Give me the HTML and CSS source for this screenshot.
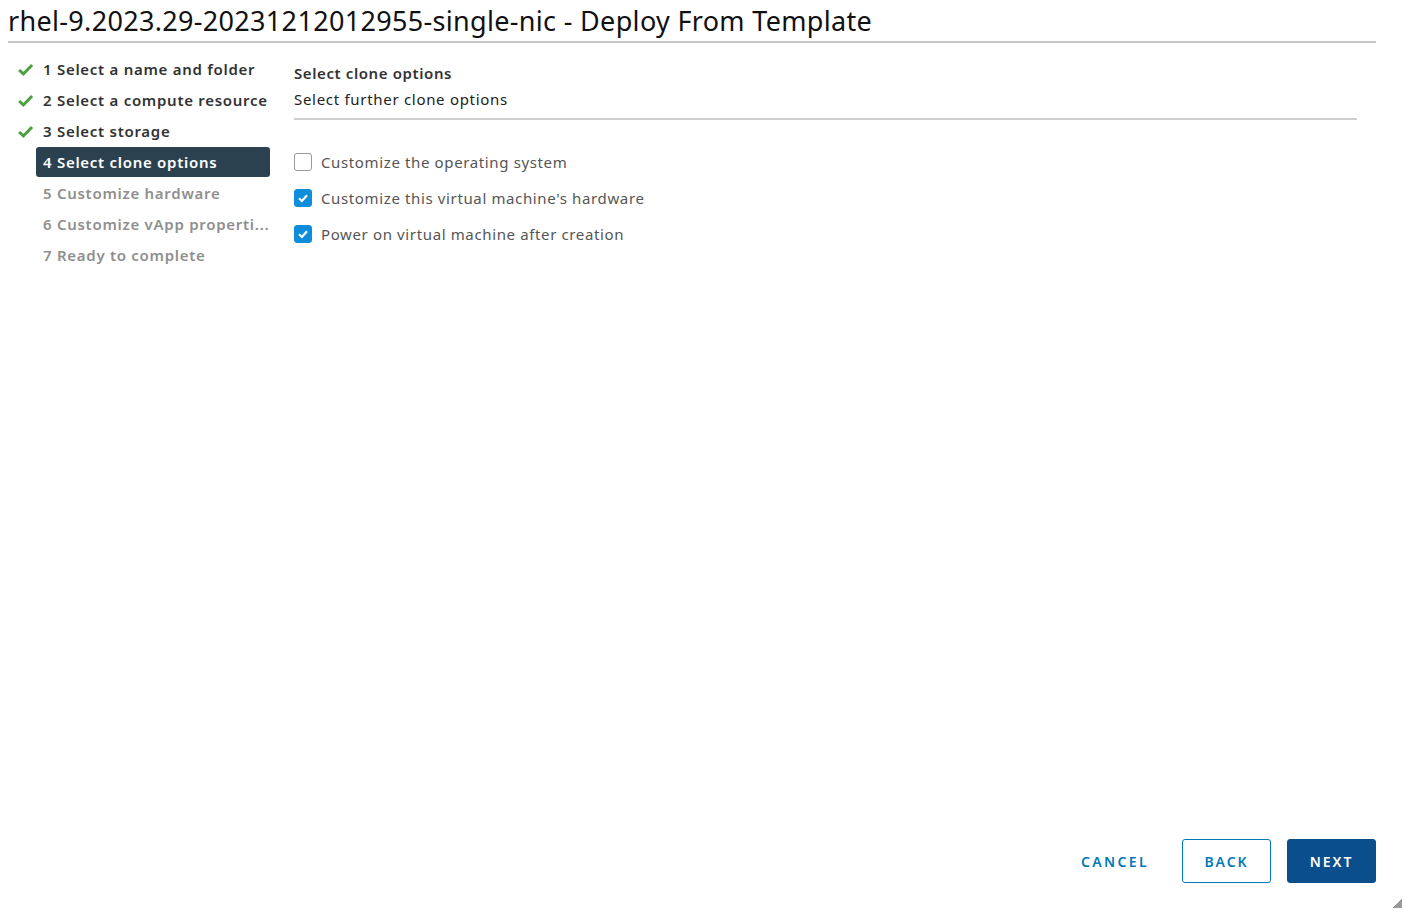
FILE: index.html
```html
<!DOCTYPE html>
<html lang="en">
<head>
<meta charset="utf-8">
<title>Deploy From Template</title>
<link rel="stylesheet" href="styles.css">
</head>
<body>
<div class="page">
  <h1 class="title">rhel-9.2023.29-20231212012955-single-nic - Deploy From Template</h1>
  <div class="wizard">
    <nav class="steps">
      <div class="step done"><svg class="check" viewBox="0 0 16 16"><path d="M2 8.5 L6 12.2 L14.2 3.8" /></svg>1 Select a name and folder</div>
      <div class="step done"><svg class="check" viewBox="0 0 16 16"><path d="M2 8.5 L6 12.2 L14.2 3.8" /></svg>2 Select a compute resource</div>
      <div class="step done"><svg class="check" viewBox="0 0 16 16"><path d="M2 8.5 L6 12.2 L14.2 3.8" /></svg>3 Select storage</div>
      <div class="step active">4 Select clone options</div>
      <div class="step todo">5 Customize hardware</div>
      <div class="step todo">6 Customize vApp properti...</div>
      <div class="step todo">7 Ready to complete</div>
    </nav>
    <main class="content">
      <div class="head">
        <div class="head-title">Select clone options</div>
        <div class="head-sub">Select further clone options</div>
      </div>
      <div class="options">
        <label class="opt"><span class="box"></span>Customize the operating system</label>
        <label class="opt"><span class="box on"><svg viewBox="0 0 16 16"><path d="M4 8.3 L6.9 11 L12 5.3" /></svg></span>Customize this virtual machine's hardware</label>
        <label class="opt"><span class="box on"><svg viewBox="0 0 16 16"><path d="M4 8.3 L6.9 11 L12 5.3" /></svg></span>Power on virtual machine after creation</label>
      </div>
    </main>
  </div>
  <footer class="actions">
    <button class="btn link">CANCEL</button>
    <button class="btn outline">BACK</button>
    <button class="btn primary">NEXT</button>
  </footer>
  <div class="grip"></div>
</div>
</body>
</html>
```
FILE: styles.css
```css
html, body {
  margin: 0;
  padding: 0;
  background: #fff;
}
body {
  font-family: "Noto Sans", "Open Sans", sans-serif;
  color: #333;
}
.page {
  position: relative;
  height: 913px;
  display: flex;
  flex-direction: column;
  box-sizing: border-box;
  padding: 0 34px 30px 8px;
}
.title {
  margin: 0;
  font-weight: 400;
  font-size: 27px;
  letter-spacing: 0.32px;
  line-height: 40px;
  color: #111;
  padding-top: 1px;
  border-bottom: 2px solid #c8c8c8;
}
.wizard {
  flex: 1;
  display: flex;
  padding-top: 11px;
}
.steps {
  width: 262px;
  flex: none;
  padding-left: 28px;
  box-sizing: border-box;
}
.step {
  position: relative;
  height: 31px;
  line-height: 31px;
  font-size: 15px;
  font-weight: 600;
  letter-spacing: 0.72px;
  padding-left: 7px;
  white-space: nowrap;
  border-radius: 3px;
}
.step.done { color: #333; }
.step.todo { color: #8f8f8f; }
.step.active {
  background: #2b414f;
  color: #fff;
  height: 30px;
  line-height: 30px;
  margin-bottom: 1px;
}
.check {
  position: absolute;
  left: -19px;
  top: 7px;
  width: 17px;
  height: 17px;
  fill: none;
  stroke: #4aa23e;
  stroke-width: 2.8;
}
.content {
  flex: 1;
  padding-left: 24px;
  padding-right: 19px;
}
.head {
  border-bottom: 2px solid #cfcfcf;
  padding-top: 7px;
  padding-bottom: 5px;
}
.head-title {
  font-size: 15px;
  font-weight: 600;
  letter-spacing: 0.6px;
  line-height: 24px;
  color: #333;
}
.head-sub {
  font-size: 15px;
  letter-spacing: 0.7px;
  line-height: 28px;
  color: #222;
}
.options {
  padding-top: 24px;
  display: flex;
  flex-direction: column;
}
.opt {
  display: flex;
  align-items: center;
  height: 36px;
  font-size: 15px;
  letter-spacing: 0.63px;
  color: #555;
  gap: 9px;
}
.box {
  width: 16px;
  height: 16px;
  border: 1.5px solid #9a9a9a;
  border-radius: 3px;
  box-sizing: content-box;
  display: flex;
  align-items: center;
  justify-content: center;
}
.box.on {
  background: #0d8ddb;
  border-color: #0d8ddb;
}
.box svg {
  width: 16px;
  height: 16px;
  fill: none;
  stroke: #fff;
  stroke-width: 2.2;
}
.actions {
  display: flex;
  justify-content: flex-end;
  gap: 16px;
}
.btn {
  height: 44px;
  font-family: "Noto Sans", "Open Sans", sans-serif;
  font-size: 14px;
  font-weight: 600;
  letter-spacing: 0.14em;
  border-radius: 3px;
  padding: 0 18px;
  cursor: pointer;
  background: #fff;
}
.btn.link {
  border: 1px solid transparent;
  color: #0079b8;
  padding: 0 16px 0 12px;
  letter-spacing: 0.17em;
}
.btn.outline {
  border: 1.5px solid #0079b8;
  color: #0079b8;
  width: 89px;
}
.btn.primary {
  border: 1px solid #0a4f8c;
  background: #0a4f8c;
  color: #fff;
  width: 89px;
}
.grip {
  position: absolute;
  right: 8px;
  bottom: 5px;
  width: 10px;
  height: 10px;
  background: linear-gradient(135deg, transparent 50%, #9a9a9a 50%);
}
```
